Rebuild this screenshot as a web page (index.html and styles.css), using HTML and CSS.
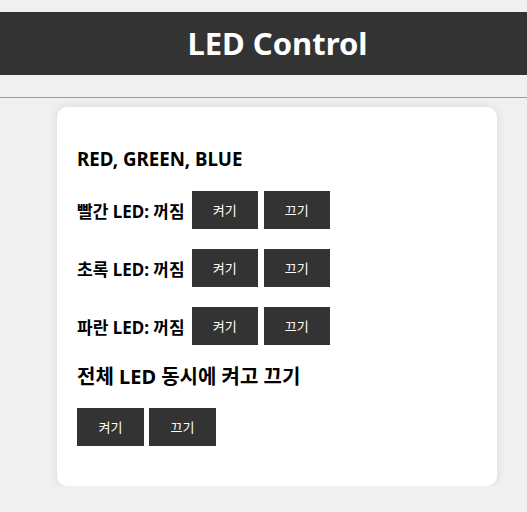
FILE: index.html
```html
<!DOCTYPE html>
<html lang="ko">
<head>
<meta charset="utf-8">
<title>LED Control</title>
<link rel="stylesheet" href="styles.css">
</head>
<body>
<header class="header">
  <h1 class="title">LED Control</h1>
</header>
<hr class="divider">
<main class="card">
  <h3 class="section-title">RED, GREEN, BLUE</h3>
  <div class="rows">
    <div class="row">
      <span class="label">빨간 LED: 꺼짐</span>
      <button class="btn">켜기</button>
      <button class="btn">끄기</button>
    </div>
    <div class="row">
      <span class="label">초록 LED: 꺼짐</span>
      <button class="btn">켜기</button>
      <button class="btn">끄기</button>
    </div>
    <div class="row">
      <span class="label">파란 LED: 꺼짐</span>
      <button class="btn">켜기</button>
      <button class="btn">끄기</button>
    </div>
  </div>
  <h3 class="section-title all-title">전체 LED 동시에 켜고 끄기</h3>
  <div class="row last-row">
    <button class="btn">켜기</button>
    <button class="btn">끄기</button>
  </div>
</main>
</body>
</html>
```
FILE: styles.css
```css
html, body {
  margin: 0;
  padding: 0;
}
body {
  background: #f0f0f0;
  font-family: "Noto Sans", "Noto Sans CJK KR", sans-serif;
  color: #000;
}
.header {
  margin-top: 12px;
  height: 63px;
  padding-left: 28px;
  background: #333333;
  display: flex;
  align-items: center;
  justify-content: center;
}
.title {
  margin: 0;
  color: #fff;
  font-size: 31px;
  font-weight: 700;
  line-height: 1;
}
.divider {
  margin: 22px 0 9px;
  border: 0;
  border-top: 1px solid #9a9a9a;
  height: 0;
}
.card {
  display: block;
  margin-left: 57px;
  width: 400px;
  padding: 20px;
  background: #fff;
  border-radius: 10px;
  box-shadow: 0 0 10px rgba(0, 0, 0, 0.1);
}
.section-title {
  margin: 19px 0 20px;
  font-size: 18.72px;
  font-weight: 700;
  line-height: 25px;
}
.all-title {
  margin: 18px 0 17px;
  font-size: 20px;
  line-height: 28px;
}
.rows {
  display: flex;
  flex-direction: column;
  gap: 20px;
}
.row {
  display: flex;
  align-items: center;
  gap: 6px;
}
.last-row {
  gap: 5px;
  margin-bottom: 20px;
}
.label {
  font-size: 17px;
  font-weight: 700;
  margin-right: 1px;
}
.btn {
  background: #333333;
  color: #fff;
  border: 0;
  border-radius: 0;
  padding: 10px 20px;
  font-family: "Noto Sans CJK KR", sans-serif;
  font-size: 13px;
  line-height: 18px;
  height: 38px;
  width: 66px;
  cursor: pointer;
}
.last-row .btn {
  width: 67px;
}
```
